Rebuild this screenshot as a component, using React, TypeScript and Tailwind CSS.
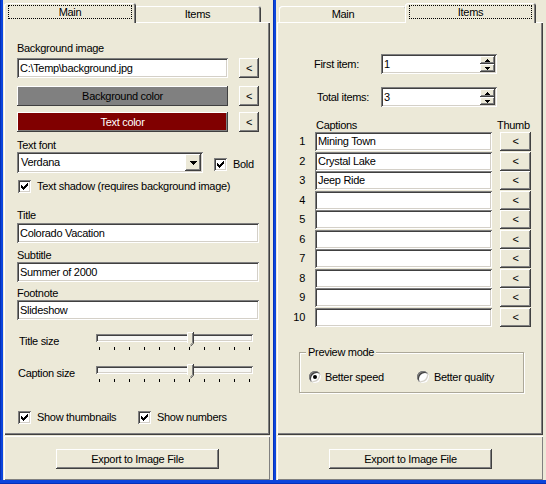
import type { ReactNode } from "react"

// classic 3D edges
const raised = "shadow-[inset_-1px_-1px_0_#404040,inset_1px_1px_0_#ffffff,inset_-2px_-2px_0_#808080]"
const sunken = "shadow-[inset_1px_1px_0_#808080,inset_-1px_-1px_0_#ffffff,inset_2px_2px_0_#404040,inset_-2px_-2px_0_#d4d0c8]"

const captions = ["Mining Town", "Crystal Lake", "Jeep Ride", "", "", "", "", "", "", ""]

// standard 7x7 check mark, one 3px column per x
const checkPath = [2, 3, 4, 3, 2, 1, 0].map((y, i) => `M${3 + i} ${3 + y}h1v3h-1z`).join("")

function Label({ children, className = "" }: { children: ReactNode; className?: string }) {
  return <div className={`h-[13px] leading-[13px] whitespace-nowrap ${className}`}>{children}</div>
}

function TextBox({ value, className = "" }: { value: string; className?: string }) {
  return (
    <div className={`flex items-center bg-white pl-[3px] whitespace-nowrap ${sunken} ${className}`}>{value}</div>
  )
}

function Button({ children, className = "" }: { children: ReactNode; className?: string }) {
  return <div className={`flex items-center justify-center whitespace-nowrap ${raised} ${className}`}>{children}</div>
}

function Check({ className = "" }: { className?: string }) {
  return (
    <div className={`h-[13px] w-[13px] shrink-0 bg-white ${sunken} ${className}`}>
      <svg width="13" height="13" viewBox="0 0 13 13">
        <path d={checkPath} fill="#000" />
      </svg>
    </div>
  )
}

function Radio({ on }: { on?: boolean }) {
  return (
    <div className={`flex h-[12px] w-[12px] shrink-0 items-center justify-center rounded-full bg-white ${sunken}`}>
      {on && <div className="h-[4px] w-[4px] rounded-full bg-black" />}
    </div>
  )
}

function Slider() {
  return (
    <div className="relative h-[22px] w-[157px]">
      <div className={`mt-[3px] h-[8px] w-full bg-[#f7f7f4] ${sunken}`} />
      <div className="mt-[5px] flex justify-between px-[3px]">
        {Array.from({ length: 11 }).map((_, i) => (
          <div key={i} className="h-[3px] w-[1px] bg-black" />
        ))}
      </div>
      <svg className="absolute left-[91px] top-[1px]" width="7" height="15" viewBox="0 0 7 15">
        <path d="M0 0H7V11L3.5 14.5L0 11Z" fill="#ece9d8" />
        <path d="M0.5 11V0.5H6" stroke="#fff" fill="none" />
        <path d="M6.5 0V11.2L3.5 14.3" stroke="#404040" fill="none" />
        <path d="M5.5 1V10.8L3.5 12.8" stroke="#808080" fill="none" />
      </svg>
    </div>
  )
}

function Tab({ label, active, w }: { label: string; active: boolean; w: number }) {
  if (active) {
    return (
      <div
        className={`relative z-10 -mx-[2px] mb-[-1px] h-[20px] rounded-t-[3px] bg-[#ece9d8] px-[4px] pt-[2px] shadow-[inset_1px_1px_0_#ffffff,inset_-1px_0_0_#404040,inset_-2px_0_0_#808080]`}
        style={{ width: w + 4 }}
      >
        <div className="flex h-[14px] items-center justify-center border border-dotted border-black">{label}</div>
      </div>
    )
  }
  return (
    <div
      className="flex h-[16px] items-center justify-center rounded-t-[3px] pt-[1px] shadow-[inset_1px_1px_0_#ffffff,inset_-1px_0_0_#404040,inset_-2px_0_0_#808080]"
      style={{ width: w }}
    >
      {label}
    </div>
  )
}

function Window({ tab, children }: { tab: "main" | "items"; children: ReactNode }) {
  return (
    <div className="flex h-[484px] w-[273px] shrink-0 flex-col">
      <div className="flex h-[480px]">
        <div className="w-[3px] bg-[#0b45dc] shadow-[inset_1px_0_0_#0530b8]" />
        <div className="flex flex-1 flex-col bg-[#ece9d8] pl-[1px]">
          <div className="flex h-[22px] w-[266px] items-end pl-[2px]">
            <Tab label="Main" active={tab === "main"} w={128} />
            <Tab label="Items" active={tab === "items"} w={127} />
          </div>
          <div className="flex h-[413px] w-[266px] flex-col shadow-[inset_1px_1px_0_#ffffff,inset_-1px_-1px_0_#404040,inset_-2px_-2px_0_#808080]">
            {children}
          </div>
          <div className="mt-[1px] h-[44px] w-[266px] pt-[13px] shadow-[inset_1px_1px_0_#ffffff,inset_-1px_-1px_0_#808080]">
            <Button className="ml-[52px] h-[20px] w-[163px]">Export to Image File</Button>
          </div>
        </div>
      </div>
      <div className="h-[4px] bg-[#0b45dc] shadow-[inset_0_-1px_0_#0530b8]" />
    </div>
  )
}

function MainTab() {
  return (
    <div className="flex flex-col pl-[13px]">
      <Label className="mt-[20px]">Background image</Label>
      <div className="mt-[3px] flex h-[20px]">
        <TextBox value="C:\Temp\background.jpg" className="w-[211px]" />
        <Button className="ml-[11px] w-[20px]">&lt;</Button>
      </div>
      <div className="mt-[8px] flex h-[20px]">
        <Button className="w-[211px] bg-[#808080]">Background color</Button>
        <Button className="ml-[11px] w-[20px]">&lt;</Button>
      </div>
      <div className="mt-[6px] flex h-[20px]">
        <Button className="w-[211px] bg-[#800000] text-white">Text color</Button>
        <Button className="ml-[11px] w-[20px]">&lt;</Button>
      </div>
      <Label className="mt-[7px]">Text font</Label>
      <div className="flex h-[21px]">
        <div className={`flex w-[186px] items-center justify-between bg-white pl-[4px] pr-[2px] ${sunken}`}>
          <span>Verdana</span>
          <div className={`flex h-[17px] w-[16px] items-center justify-center bg-[#ece9d8] ${raised}`}>
            <svg width="7" height="4" viewBox="0 0 7 4">
              <path d="M0 0h7v1h-1v1h-1v1h-1v1h-1v-1h-1v-1h-1v-1h-1z" fill="#000" />
            </svg>
          </div>
        </div>
        <Check className="ml-[11px] mt-[6px]" />
        <span className="ml-[6px] mt-[6px] leading-[13px]">Bold</span>
      </div>
      <div className="mt-[7px] flex h-[13px] items-center pl-[1px]">
        <Check />
        <span className="ml-[6px] whitespace-nowrap">Text shadow (requires background image)</span>
      </div>
      <Label className="mt-[16px]">Title</Label>
      <TextBox value="Colorado Vacation" className="mt-[1px] h-[20px] w-[242px]" />
      <Label className="mt-[6px]">Subtitle</Label>
      <TextBox value="Summer of 2000" className="h-[20px] w-[242px]" />
      <Label className="mt-[5px]">Footnote</Label>
      <TextBox value="Slideshow" className="h-[20px] w-[242px]" />
      <div className="mt-[11px] flex h-[22px]">
        <Label className="mt-[4px] w-[79px] pl-[2px]">Title size</Label>
        <Slider />
      </div>
      <div className="mt-[10px] flex h-[22px]">
        <Label className="mt-[4px] w-[79px] pl-[1px]">Caption size</Label>
        <Slider />
      </div>
      <div className="mt-[26px] flex h-[13px] items-center pl-[1px]">
        <div className="flex w-[120px] items-center">
          <Check />
          <span className="ml-[6px]">Show thumbnails</span>
        </div>
        <Check />
        <span className="ml-[6px]">Show numbers</span>
      </div>
    </div>
  )
}

function Spin({ value }: { value: string }) {
  return (
    <div className={`flex h-[20px] w-[116px] items-center justify-between bg-white pl-[3px] pr-[2px] ${sunken}`}>
      <span>{value}</span>
      <div className="flex h-[16px] w-[15px] flex-col">
        <div className={`flex h-[8px] items-center justify-center bg-[#ece9d8] ${raised}`}>
          <svg width="5" height="3" viewBox="0 0 5 3">
            <path d="M2 0h1v1h1v1h1v1h-5v-1h1v-1h1z" fill="#000" />
          </svg>
        </div>
        <div className={`flex h-[8px] items-center justify-center bg-[#ece9d8] ${raised}`}>
          <svg width="5" height="3" viewBox="0 0 5 3">
            <path d="M0 0h5v1h-1v1h-1v1h-1v-1h-1v-1h-1z" fill="#000" />
          </svg>
        </div>
      </div>
    </div>
  )
}

function ItemsTab() {
  return (
    <div className="flex flex-col">
      <div className="mt-[32px] flex h-[20px] items-center">
        <div className="w-[104px] pl-[37px]">First item:</div>
        <Spin value="1" />
      </div>
      <div className="mt-[13px] flex h-[20px] items-center">
        <div className="w-[104px] pl-[40px]">Total items:</div>
        <Spin value="3" />
      </div>
      <div className="mt-[12px] flex h-[13px] leading-[13px]">
        <div className="w-[220px] pl-[39px]">Captions</div>
        <div>Thumb</div>
      </div>
      <div className="flex flex-col">
        {captions.map((c, i) => (
          <div key={i} className="flex h-[19.5px]">
            <div className="flex h-[19px] w-[28px] items-center justify-end">{i + 1}</div>
            <TextBox value={c} className="ml-[10px] h-[19px] w-[177px]" />
            <Button className="ml-[8px] h-[19px] w-[31px]">&lt;</Button>
          </div>
        ))}
      </div>
      <div className="relative ml-[22px] mt-[25px] h-[41px] w-[225px] border border-[#aca899] shadow-[inset_1px_1px_0_#ffffff,1px_1px_0_#ffffff]">
        <div className="absolute -top-[7px] left-[6px] bg-[#ece9d8] px-[2px] leading-[13px]">Preview mode</div>
        <div className="flex items-center pl-[9px] pt-[16px]">
          <div className="flex w-[108px] items-center">
            <Radio on />
            <span className="ml-[4px]">Better speed</span>
          </div>
          <Radio />
          <span className="ml-[5px]">Better quality</span>
        </div>
      </div>
    </div>
  )
}

export default function App() {
  return (
    <div className="flex h-[484px] w-[546px] overflow-hidden bg-[#ece9d8] font-['Liberation_Sans',Arial,sans-serif] text-[11px] tracking-[-0.3px] text-black">
      <Window tab="main">
        <MainTab />
      </Window>
      <Window tab="items">
        <ItemsTab />
      </Window>
    </div>
  )
}
